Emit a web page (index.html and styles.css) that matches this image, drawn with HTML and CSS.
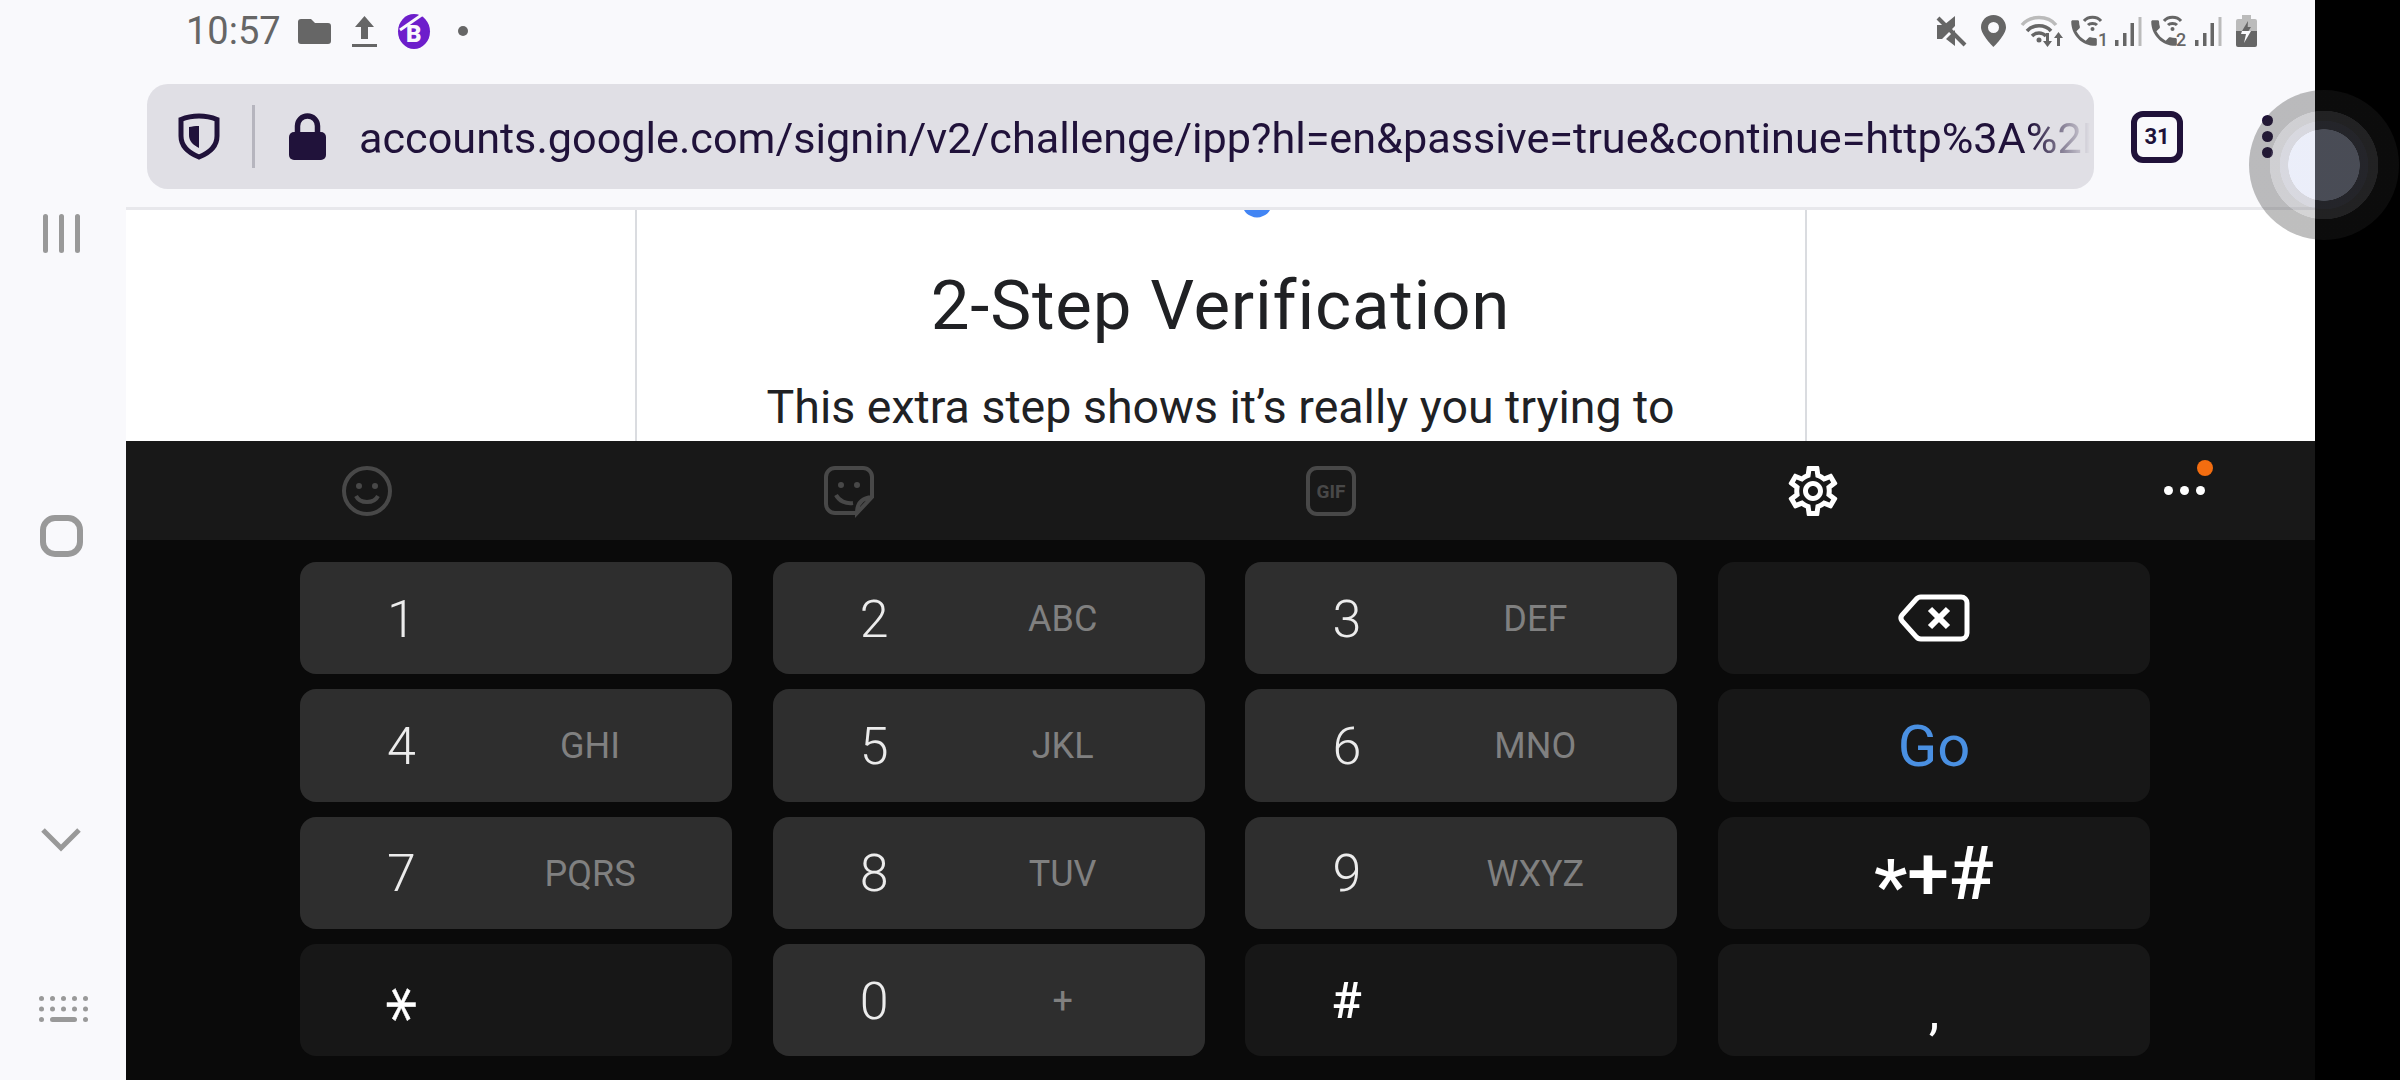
FILE: index.html
```html
<!DOCTYPE html>
<html lang="en">
<head>
<meta charset="UTF-8">
<meta name="viewport" content="width=device-width, initial-scale=1.0">
<title>2-Step Verification</title>
<link rel="stylesheet" href="styles.css">
</head>
<body>
<div class="screen">

  <nav class="navbar">
    <svg class="nav-recent" viewBox="0 0 37 39"><path d="M2.5 2.5v34M18.5 2.5v34M34.5 2.5v34"/></svg>
    <div class="nav-home"></div>
    <svg class="nav-back" viewBox="0 0 40 23"><path d="M2 2l18 18L38 2"/></svg>
    <svg class="nav-keys" viewBox="0 0 49 26">
      <g>
        <rect x="0" y="0" width="5" height="5" rx="2.5"/><rect x="11" y="0" width="5" height="5" rx="2.5"/><rect x="22" y="0" width="5" height="5" rx="2.5"/><rect x="33" y="0" width="5" height="5" rx="2.5"/><rect x="44" y="0" width="5" height="5" rx="2.5"/>
        <rect x="0" y="10.500" width="5" height="5" rx="2.5"/><rect x="11" y="10.500" width="5" height="5" rx="2.5"/><rect x="22" y="10.500" width="5" height="5" rx="2.500"/><rect x="33" y="10.500" width="5" height="5" rx="2.500"/><rect x="44" y="10.500" width="5" height="5" rx="2.500"/>
        <rect x="0" y="21" width="5" height="5" rx="2.500"/><rect x="11" y="21" width="27" height="5" rx="2.500"/><rect x="44" y="21" width="5" height="5" rx="2.500"/>
      </g>
    </svg>
  </nav>

  <div class="main">
    <div class="statusbar">
      <div class="status-left">
        <span class="clock">10:57</span>
        <svg class="ic-folder" viewBox="0 0 33 25"><path d="M3 0h10l4 4h13a3 3 0 0 1 3 3v15a3 3 0 0 1-3 3H3a3 3 0 0 1-3-3V3a3 3 0 0 1 3-3z"/></svg>
        <svg class="ic-upload" viewBox="0 0 25 31"><path d="M12.500 0L22 11h-6v12H9V11H3z"/><rect x="0" y="28" width="25" height="3"/></svg>
        <svg class="ic-brave" viewBox="0 0 32 35">
          <ellipse cx="16" cy="17.500" rx="16" ry="17.500" fill="#6d1ecb"/>
          <text x="8" y="28" class="brave-b">B</text>
          <path d="M2 16L25 0" stroke="#f9f9fc" stroke-width="3"/>
        </svg>
        <span class="status-dot"></span>
      </div>
      <div class="status-right">
        <svg class="ic-mute" viewBox="0 0 29 32"><path d="M0 10h7l11-9v10L5 24H0zM9 24l9-9v16z"/><path class="cut" d="M1 3l27 27"/></svg>
        <svg class="ic-pin" viewBox="0 0 25 32"><path fill-rule="evenodd" d="M12.500 0C5.600 0 0 5.500 0 12.300 0 20 12.500 32 12.500 32S25 20 25 12.300C25 5.500 19.400 0 12.500 0zm0 7a5.500 5.500 0 1 1 0 11 5.500 5.500 0 0 1 0-11z"/></svg>
        <svg class="ic-wifi" viewBox="0 0 42 32">
          <path class="arc-light" d="M1 10C9 0 27 0 35 10"/>
          <path class="arc" d="M6 16c6-7 18-7 24 0"/>
          <path class="arc" d="M11 21c4-4 10-4 14 0"/>
          <circle cx="18" cy="25" r="2.500"/>
          <path d="M25 18h3v8h3l-4.500 6-4.500-6h3zM36 31h3v-8h3l-4.500-6-4.500 6h3z"/>
        </svg>
        <svg class="ic-call" viewBox="0 0 36 32">
          <path transform="translate(-4 1) scale(1.420)" d="M6.620 10.790c1.440 2.830 3.760 5.140 6.590 6.590l2.200-2.200c.27-.27.67-.36 1.020-.24 1.120.37 2.330.57 3.570.57.55 0 1 .45 1 1V20c0 .55-.45 1-1 1-9.390 0-17-7.610-17-17 0-.55.45-1 1-1h3.500c.55 0 1 .45 1 1 0 1.250.2 2.450.57 3.570.11.35.03.74-.25 1.020l-2.200 2.200z"/>
          <path class="arc-thin" d="M13 6c4-5 13-5 17 0"/>
          <path class="arc-thin" d="M17 10c2-2 7-2 9 0"/>
          <circle cx="21.500" cy="14" r="2"/>
          <text x="27" y="31" class="sim">1</text>
        </svg>
        <svg class="ic-signal" viewBox="0 0 27 30"><rect x="0" y="24" width="3.500" height="6"/><rect x="8" y="17" width="3.500" height="13"/><rect x="15.500" y="7" width="3.500" height="23"/><rect class="bar-off" x="23.500" y="1" width="3" height="29"/></svg>
        <svg class="ic-call" viewBox="0 0 36 32">
          <path transform="translate(-4 1) scale(1.420)" d="M6.620 10.790c1.440 2.830 3.760 5.140 6.590 6.590l2.200-2.200c.27-.27.67-.36 1.020-.24 1.120.37 2.330.57 3.570.57.55 0 1 .45 1 1V20c0 .55-.45 1-1 1-9.390 0-17-7.610-17-17 0-.55.45-1 1-1h3.500c.55 0 1 .45 1 1 0 1.250.2 2.450.57 3.570.11.35.03.74-.25 1.020l-2.200 2.200z"/>
          <path class="arc-thin" d="M13 6c4-5 13-5 17 0"/>
          <path class="arc-thin" d="M17 10c2-2 7-2 9 0"/>
          <circle cx="21.500" cy="14" r="2"/>
          <text x="25" y="31" class="sim">2</text>
        </svg>
        <svg class="ic-signal last" viewBox="0 0 27 30"><rect x="0" y="24" width="3.500" height="6"/><rect x="8" y="17" width="3.500" height="13"/><rect x="15.500" y="7" width="3.500" height="23"/><rect class="bar-off" x="23.500" y="1" width="3" height="29"/></svg>
        <svg class="ic-battery" viewBox="0 0 21 32">
          <path class="bar-off" d="M6 0h9v4h4a2 2 0 0 1 2 2v10H0V6a2 2 0 0 1 2-2h4z"/>
          <path d="M0 16h21v14a2 2 0 0 1-2 2H2a2 2 0 0 1-2-2z"/>
          <path d="M12 6l-6 10h3.500l2-1z"/>
          <path d="M15 12h-5l-1 4h3.500z"/>
          <path fill="#f9f9fc" d="M6 16h9L8 28l2-9H5z"/>
        </svg>
      </div>
    </div>

    <div class="toolbar">
      <div class="urlbar">
        <svg class="ic-shield" viewBox="0 0 42 47">
          <path class="shield-line" d="M21 3c6 0 12 1 18 3.500V23c0 10-8 17-18 21C11 40 3 33 3 23V6.500C9 4 15 3 21 3z"/>
          <path class="shield-fill" d="M21 13v22c-6-3-10-7-10-13v-8c3-.5 6-1 10-1z"/>
        </svg>
        <span class="url-sep"></span>
        <svg class="ic-lock" viewBox="0 0 37 47">
          <rect x="0" y="19" width="37" height="28" rx="5"/>
          <path class="lock-hook" d="M8.500 22V13a10 10 0 0 1 20 0v9"/>
        </svg>
        <span class="url-text">accounts.google.com/signin/v2/challenge/ipp?hl=en&amp;passive=true&amp;continue=http%3A%2F</span>
      </div>
      <div class="tab-count">31</div>
      <div class="kebab"><span></span><span></span><span></span></div>
    </div>

    <div class="page">
      <div class="card">
        <svg class="g-tail" viewBox="0 0 26 7"><path d="M0 0h26a13 13 0 0 1-7 6 13 13 0 0 1-12 0 13 13 0 0 1-7-6z"/></svg>
        <h1>2-Step Verification</h1>
        <p>This extra step shows it’s really you trying to</p>
      </div>
    </div>

    <div class="keyboard">
      <div class="kb-tools">
        <div class="kb-tool">
          <svg class="tool-ic" viewBox="0 0 50 50"><circle cx="25" cy="25" r="23"/><circle class="solid" cx="17" cy="20" r="3"/><circle class="solid" cx="33" cy="20" r="3"/><path d="M14 30c4 8 18 8 22 0"/></svg>
        </div>
        <div class="kb-tool">
          <svg class="tool-ic" viewBox="0 0 50 50"><path d="M33 47H11a9 9 0 0 1-9-9V11a9 9 0 0 1 9-9h28a9 9 0 0 1 9 9v20L33 47c0-9 4-15 15-16"/><circle class="solid" cx="17" cy="19" r="3"/><circle class="solid" cx="33" cy="19" r="3"/><path d="M12 29c3 6 10 9 17 8"/></svg>
        </div>
        <div class="kb-tool">
          <svg class="tool-ic" viewBox="0 0 50 50"><rect x="2" y="2" width="46" height="46" rx="9"/><text class="gif" x="25" y="32">GIF</text></svg>
        </div>
        <div class="kb-tool">
          <svg class="gear" viewBox="0 0 24 24"><path d="M19.430 12.980c.04-.32.07-.64.07-.98 0-.34-.03-.66-.07-.98l2.110-1.650c.19-.15.24-.42.12-.64l-2-3.460c-.09-.16-.26-.25-.44-.25-.06 0-.12.01-.17.03l-2.490 1c-.52-.4-1.080-.73-1.690-.98l-.38-2.650C14.460 2.180 14.250 2 14 2h-4c-.25 0-.46.18-.49.42l-.38 2.650c-.61.25-1.170.59-1.690.98l-2.490-1c-.06-.02-.12-.03-.18-.03-.17 0-.34.09-.43.25l-2 3.460c-.13.22-.07.49.12.64l2.110 1.650c-.04.32-.07.65-.07.98 0 .33.03.66.07.98l-2.110 1.650c-.19.15-.24.42-.12.64l2 3.460c.09.16.26.25.44.25.06 0 .12-.01.17-.03l2.490-1c.52.4 1.080.73 1.690.98l.38 2.650c.03.24.24.42.49.42h4c.25 0 .46-.18.49-.42l.38-2.650c.61-.25 1.170-.59 1.690-.98l2.490 1c.06.02.12.03.18.03.17 0 .34-.09.43-.25l2-3.460c.12-.22.07-.49-.12-.64l-2.110-1.650zm-1.980-1.710c.04.31.05.52.05.73 0 .21-.02.43-.05.73l-.14 1.130.89.7 1.080.84-.7 1.210-1.270-.51-1.040-.42-.9.68c-.43.32-.84.56-1.250.73l-1.060.43-.16 1.130-.2 1.350h-1.400l-.19-1.350-.16-1.130-1.060-.43c-.43-.18-.83-.41-1.230-.71l-.91-.7-1.060.43-1.270.51-.7-1.210 1.080-.84.89-.7-.14-1.130c-.03-.31-.05-.54-.05-.74s.02-.43.05-.73l.14-1.130-.89-.7-1.080-.84.7-1.210 1.270.51 1.040.42.9-.68c.43-.32.84-.56 1.250-.73l1.060-.43.16-1.130.2-1.350h1.390l.19 1.350.16 1.130 1.060.43c.43.18.83.41 1.230.71l.91.7 1.060-.43 1.270-.51.7 1.210-1.070.85-.89.7.14 1.130zM12 8c-2.210 0-4 1.790-4 4s1.790 4 4 4 4-1.790 4-4-1.790-4-4-4zm0 6c-1.100 0-2-.9-2-2s.9-2 2-2 2 .9 2 2-.9 2-2 2z"/></svg>
        </div>
        <div class="kb-tool">
          <div class="more"><span></span><span></span><span></span><i class="more-badge"></i></div>
        </div>
      </div>

      <div class="keys">
        <div class="key"><span class="num">1</span></div>
        <div class="key"><span class="num">2</span><span class="abc">ABC</span></div>
        <div class="key"><span class="num">3</span><span class="abc">DEF</span></div>
        <div class="key dark center">
          <svg class="backspace" viewBox="0 0 72 48"><path d="M23 3h40a6 6 0 0 1 6 6v30a6 6 0 0 1-6 6H23a6 6 0 0 1-5-2.500L4 27a5 5 0 0 1 0-6L18 5.500A6 6 0 0 1 23 3z"/><path class="x" d="M32 15l18 18M50 15L32 33"/></svg>
        </div>

        <div class="key"><span class="num">4</span><span class="abc">GHI</span></div>
        <div class="key"><span class="num">5</span><span class="abc">JKL</span></div>
        <div class="key"><span class="num">6</span><span class="abc">MNO</span></div>
        <div class="key dark center"><span class="go">Go</span></div>

        <div class="key"><span class="num">7</span><span class="abc">PQRS</span></div>
        <div class="key"><span class="num">8</span><span class="abc">TUV</span></div>
        <div class="key"><span class="num">9</span><span class="abc">WXYZ</span></div>
        <div class="key dark center"><span class="sym-switch"><span class="sym-low">*</span>+#</span></div>

        <div class="key dark"><span class="num star">*</span></div>
        <div class="key"><span class="num">0</span><span class="abc">+</span></div>
        <div class="key dark"><span class="num hash">#</span></div>
        <div class="key dark center"><span class="comma">,</span></div>
      </div>
    </div>
  </div>

  <div class="edge"></div>
</div>

<div class="float-btn"></div>
</body>
</html>
```

FILE: styles.css
```css
* {
  box-sizing: border-box;
}
body {
  margin: 0;
  background: #000;
  font-family: Roboto, "Liberation Sans", sans-serif;
  overflow: hidden;
}
svg {
  display: block;
  flex: none;
  overflow: visible;
}

.screen {
  display: flex;
  width: 2400px;
  height: 1080px;
  background: #f9f9fc;
}
.edge {
  width: 85px;
  background: #000;
}
.main {
  width: 2189px;
  display: flex;
  flex-direction: column;
}

/* left nav bar */
.navbar {
  width: 126px;
  padding: 214px 4px 0 0;
  display: flex;
  flex-direction: column;
  align-items: center;
}
.nav-recent {
  width: 37px;
  height: 39px;
}
.nav-recent path {
  fill: none;
  stroke: #999;
  stroke-width: 5px;
  stroke-linecap: round;
}
.nav-home {
  width: 43px;
  height: 42px;
  margin-top: 262px;
  border: 6px solid #999;
  border-radius: 15px;
}
.nav-back {
  width: 40px;
  height: 23px;
  margin-top: 271px;
}
.nav-back path {
  fill: none;
  stroke: #999;
  stroke-width: 5px;
}
.nav-keys {
  width: 49px;
  height: 26px;
  margin: 145px 0 0 4px;
  fill: #999;
}

/* status bar */
.statusbar {
  height: 62px;
  padding: 0 58px 0 60px;
  display: flex;
  justify-content: space-between;
  align-items: center;
  color: #666;
  fill: #666;
}
.status-left, .status-right {
  display: flex;
  align-items: center;
}
.clock {
  font-size: 38px;
  line-height: 40px;
  margin-right: 17px;
}
.ic-folder {
  width: 33px;
  height: 25px;
  margin-right: 21px;
}
.ic-upload {
  width: 25px;
  height: 31px;
  margin-right: 21px;
}
.ic-brave {
  width: 32px;
  height: 35px;
  margin-right: 28px;
}
.brave-b {
  font-size: 24px;
  font-weight: 900;
  fill: #f9f9fc;
}
.status-dot {
  width: 10px;
  height: 10px;
  border-radius: 50%;
  background: #666;
}
.ic-mute {
  width: 29px;
  height: 32px;
  margin-right: 15px;
}
.ic-mute .cut {
  stroke: #666;
  stroke-width: 4px;
}
.ic-pin {
  width: 25px;
  height: 32px;
  margin-right: 15px;
}
.ic-wifi {
  width: 42px;
  height: 32px;
  margin-right: 8px;
}
.arc-light, .arc, .arc-thin {
  fill: none;
  stroke-width: 3.5px;
  stroke: #666;
}
.arc-light {
  stroke: #bbb;
}
.arc-thin {
  stroke-width: 3px;
}
.ic-call {
  width: 36px;
  height: 32px;
  margin-right: 8px;
}
.sim {
  font-size: 18px;
  font-weight: 500;
}
.ic-signal {
  width: 27px;
  height: 30px;
  margin-right: 9px;
}
.ic-signal.last {
  margin-right: 14px;
}
.bar-off {
  fill: #bbb;
}
.ic-battery {
  width: 21px;
  height: 32px;
}

/* browser toolbar */
.toolbar {
  height: 148px;
  padding: 22px 0 18px 21px;
  display: flex;
  align-items: center;
  border-bottom: 3px solid #e8e8ec;
  color: #20123a;
}
.urlbar {
  width: 1947px;
  height: 105px;
  padding-left: 31px;
  display: flex;
  align-items: center;
  overflow: hidden;
  background: #e0dfe5;
  border-radius: 21px;
}
.ic-shield {
  width: 42px;
  height: 47px;
}
.shield-line {
  fill: none;
  stroke: #20123a;
  stroke-width: 5px;
}
.shield-fill {
  fill: #20123a;
}
.url-sep {
  width: 3px;
  height: 63px;
  margin: 0 34px 0 32px;
  background: #b6b5be;
}
.ic-lock {
  width: 37px;
  height: 47px;
  fill: #20123a;
}
.lock-hook {
  fill: none;
  stroke: #20123a;
  stroke-width: 5.5px;
}
.url-text {
  flex: 1;
  min-width: 0;
  margin: 4px 4px 0 33px;
  font-size: 43.2px;
  white-space: nowrap;
  overflow: hidden;
  -webkit-mask-image: linear-gradient(to right, #000 calc(100% - 60px), transparent 100%);
  mask-image: linear-gradient(to right, #000 calc(100% - 60px), transparent 100%);
}
.tab-count {
  width: 52px;
  height: 52px;
  margin-left: 37px;
  display: flex;
  align-items: center;
  justify-content: center;
  border: 6px solid #20123a;
  border-radius: 12px;
  font-size: 22px;
  font-weight: 700;
}
.kebab {
  margin-left: 79px;
  display: flex;
  flex-direction: column;
  gap: 5px;
}
.kebab span {
  width: 11px;
  height: 11px;
  border-radius: 50%;
  background: #20123a;
}

/* web page behind the keyboard */
.page {
  height: 231px;
  overflow: hidden;
  background: #fff;
}
.card {
  width: 1172px;
  height: 100%;
  margin: 0 auto;
  display: flex;
  flex-direction: column;
  align-items: center;
  border: solid #dadce0;
  border-width: 0 2px;
  color: #202124;
}
.g-tail {
  width: 26px;
  height: 7px;
  margin-left: 72px;
  fill: #4285f4;
}
.card h1 {
  margin: 51px 0 0;
  font-size: 69px;
  line-height: 76px;
  font-weight: 400;
  letter-spacing: .8px;
}
.card p {
  margin: 35px 0 0;
  font-size: 46.5px;
  line-height: 56px;
  white-space: nowrap;
}

/* samsung keyboard */
.keyboard {
  height: 639px;
  background: #0a0a0a;
}
.kb-tools {
  height: 99px;
  display: grid;
  grid-template-columns: repeat(4, 482px) 1fr;
  background: #181818;
}
.kb-tool {
  display: flex;
  align-items: center;
  justify-content: center;
}
.tool-ic {
  width: 50px;
  height: 50px;
}
.tool-ic * {
  fill: none;
  stroke: #484848;
  stroke-width: 4px;
}
.tool-ic .solid {
  fill: #484848;
  stroke: none;
}
.tool-ic .gif {
  fill: #484848;
  stroke: none;
  font-size: 19px;
  font-weight: 700;
  text-anchor: middle;
}
.gear {
  width: 60px;
  height: 60px;
  fill: #fff;
}
.more {
  position: relative;
  display: flex;
  gap: 7px;
}
.more span {
  width: 9px;
  height: 9px;
  border-radius: 50%;
  background: #fff;
}
.more-badge {
  position: absolute;
  left: 33px;
  top: -26px;
  width: 16px;
  height: 16px;
  border-radius: 50%;
  background: #f36d10;
}

.keys {
  padding: 22px 0 0 174px;
  display: grid;
  grid-template-columns: repeat(4, 432px);
  grid-auto-rows: 112.3px;
  gap: 15px 40.67px;
}
.key {
  display: grid;
  grid-template-columns: 203px 174px;
  align-items: center;
  justify-items: center;
  background: #2e2e2e;
  border-radius: 16px;
}
.key.dark {
  background: #171717;
}
.key.center {
  display: flex;
  justify-content: center;
}
.num {
  grid-column: 1;
  margin-top: 2px;
  font-size: 52px;
  font-weight: 300;
  color: #ececec;
}
.abc {
  grid-column: 2;
  margin-top: 2px;
  font-size: 36px;
  color: #808080;
}
.backspace {
  width: 72px;
  height: 48px;
}
.backspace path {
  fill: none;
  stroke: #fff;
  stroke-width: 5px;
}
.backspace .x {
  stroke-width: 6px;
}
.go {
  margin-top: 2px;
  font-size: 58px;
  color: #4a90e2;
}
.sym-switch {
  font-size: 75px;
  line-height: 74px;
  font-weight: 500;
  color: #fff;
}
.sym-low {
  display: inline-block;
  transform: translateY(13px);
}
.star {
  font-family: "DejaVu Sans", sans-serif;
  font-size: 63px;
  line-height: 63px;
  font-weight: 400;
  color: #fff;
  -webkit-text-stroke: .4px #fff;
  transform: translate(-11px, 3px) rotate(90deg) scaleX(1.15);
}
.hash {
  font-size: 50px;
  font-weight: 500;
  color: #fff;
}
.comma {
  margin-top: 20px;
  font-size: 54px;
  color: #fff;
}

/* assistive touch button, floats over everything */
.float-btn {
  position: absolute;
  left: 2249px;
  top: 90px;
  width: 150px;
  height: 150px;
  border-radius: 50%;
  background: radial-gradient(circle closest-side,
    rgba(210, 218, 245, .35) 35.5px,
    rgba(130, 132, 150, .28) 36px 44px,
    rgba(112, 112, 116, .3) 44.5px 54px,
    rgba(40, 40, 40, .3) 54.5px);
}
```
